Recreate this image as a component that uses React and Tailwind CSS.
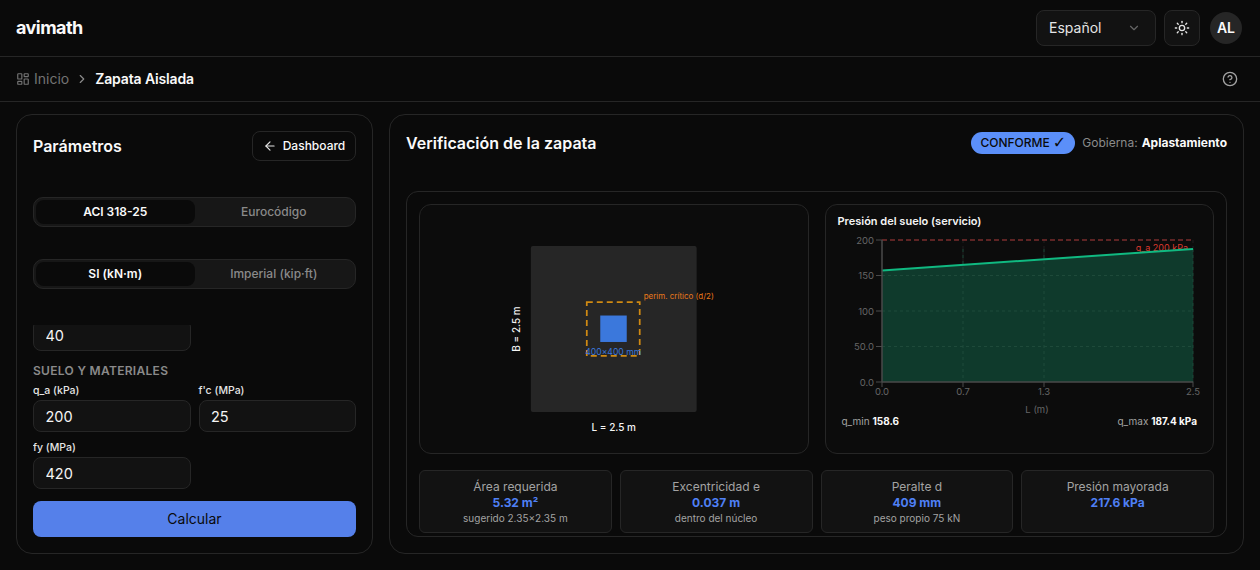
import React from "react";
import { ArrowLeft, ChevronDown, ChevronRight, CircleHelp, LayoutDashboard, Sun } from "lucide-react";

const Field = ({ label, value }) => (
  <div>
    <div className="h-[17px] text-[10.5px] leading-[16px] font-medium text-[#e5e5e5]">{label}</div>
    <input
      readOnly
      value={value}
      className="w-full h-8 px-[11.5px] rounded-lg border border-[#262626] bg-[#121212] text-[14.5px] text-[#f5f5f5] outline-none"
    />
  </div>
);

const Segmented = ({ active, other, className }) => (
  <div className={`grid grid-cols-2 h-[30px] p-[2px] rounded-[10px] border border-[#262626] bg-[#171717] text-xs ${className}`}>
    <div className="flex items-center justify-center rounded-lg bg-[#0a0a0a] font-semibold text-[#fafafa]">{active}</div>
    <div className="flex items-center justify-center font-medium text-[#8a8a8a]">{other}</div>
  </div>
);

const Stat = ({ label, value, sub }) => (
  <div className="h-[63px] pt-2 rounded-md border border-[#262626] bg-[#121212] text-center">
    <div className="text-xs leading-4 text-[#a3a3a3]">{label}</div>
    <div className="text-xs leading-4 font-bold text-[#4f80f5]">{value}</div>
    <div className="text-[10px] leading-[14px] text-[#a3a3a3]">{sub}</div>
  </div>
);

const FootingPlan = () => (
  <svg className="w-full h-full" viewBox="0 0 388 248">
    <rect x="111" y="41" width="166" height="166" rx="2" fill="#262626" />
    <rect x="180.5" y="110.5" width="26.5" height="26.5" fill="#3b78dc" />
    <rect x="167" y="97" width="53" height="54" fill="none" stroke="#d08a12" strokeWidth="1.75" strokeDasharray="6 4" />
    <text x="224" y="94" fontSize="8" fill="#e8771b">perim. crítico (d/2)</text>
    <text x="193.5" y="150" fontSize="8.6" textAnchor="middle" fill="#3b78dc">400×400 mm</text>
    <text x="194" y="226" fontSize="10" fontWeight="500" textAnchor="middle" fill="#f5f5f5">L = 2.5 m</text>
    <text x="100" y="124" fontSize="10" fontWeight="500" textAnchor="middle" fill="#f5f5f5" transform="rotate(-90 100 124)">B = 2.5 m</text>
  </svg>
);

const PressureChart = () => {
  const yTicks = [
    [10, "200"],
    [45.5, "150"],
    [81, "100"],
    [116.5, "50.0"],
    [152, "0.0"],
  ];
  const xTicks = [
    [44, "0.0"],
    [125, "0.7"],
    [206, "1.3"],
    [355, "2.5"],
  ];
  return (
    <svg className="w-[363px] h-[185px] mt-px -mb-px overflow-visible shrink-0" viewBox="0 0 363 185">
      {yTicks.slice(1, 4).map(([y]) => (
        <line key={y} x1="44" x2="355" y1={y} y2={y} stroke="#1f1f1f" strokeDasharray="3 3" />
      ))}
      {xTicks.slice(1).map(([x]) => (
        <line key={x} x1={x} x2={x} y1="10" y2="152" stroke="#1f1f1f" strokeDasharray="3 3" />
      ))}
      <line x1="44" x2="355" y1="10" y2="10" stroke="#7a2c2c" strokeWidth="1.5" strokeDasharray="5 3" />
      <text x="350" y="21" fontSize="9" textAnchor="end" fill="#dc3a2e">q_a 200 kPa</text>
      <polygon points="44,40.5 355,19 355,152 44,152" fill="#0f3a2c" />
      {yTicks.slice(1, 4).map(([y]) => (
        <line key={y} x1="44" x2="355" y1={y} y2={y} stroke="#1e4a3a" strokeDasharray="3 3" />
      ))}
      {xTicks.slice(1).map(([x]) => (
        <line key={x} x1={x} x2={x} y1="19" y2="152" stroke="#1e4a3a" strokeDasharray="3 3" />
      ))}
      <line x1="44" x2="355" y1="40.5" y2="19" stroke="#10b981" strokeWidth="2" />
      <line x1="44" x2="44" y1="10" y2="152" stroke="#4a4a4a" strokeWidth="1.5" />
      <line x1="44" x2="355" y1="152" y2="152" stroke="#4a4a4a" strokeWidth="1.5" />
      {yTicks.map(([y, t]) => (
        <g key={t}>
          <line x1="38" x2="44" y1={y} y2={y} stroke="#4a4a4a" />
          <text x="36" y={y + 3.5} fontSize="9.5" textAnchor="end" fill="#666666">{t}</text>
        </g>
      ))}
      {xTicks.map(([x, t]) => (
        <g key={t}>
          <line x1={x} x2={x} y1="152" y2="157" stroke="#4a4a4a" />
          <text x={x} y="165" fontSize="9.5" textAnchor="middle" fill="#666666">{t}</text>
        </g>
      ))}
      <text x="199" y="183" fontSize="9.5" textAnchor="middle" fill="#666666">L (m)</text>
    </svg>
  );
};

export default function App() {
  return (
    <div className="w-[1260px] h-[570px] overflow-hidden flex flex-col bg-[#0a0a0a] text-[#fafafa] font-[Inter,sans-serif]">
      {/*header */}
      <header className="h-[57px] shrink-0 flex items-center justify-between pl-4 pr-[18px] border-b border-[#262626]">
        <div className="text-lg font-bold tracking-[-0.03em]">avimath</div>
        <div className="flex items-center">
          <div className="w-[120px] h-9 flex items-center justify-between pl-3 pr-[14px] rounded-lg border border-[#262626] bg-[#121212] text-sm text-[#e5e5e5]">
            Español
            <ChevronDown className="w-[14px] h-[14px] text-[#666666]" />
          </div>
          <div className="w-9 h-9 ml-2 flex items-center justify-center rounded-lg border border-[#262626] bg-[#121212]">
            <Sun className="w-4 h-4 text-[#e5e5e5]" />
          </div>
          <div className="w-8 h-8 ml-[10px] flex items-center justify-center rounded-full bg-[#262626] text-sm font-semibold">AL</div>
        </div>
      </header>

      {/*breadcrumb */}
      <div className="h-[45px] shrink-0 flex items-center justify-between pl-4 pr-[22px] border-b border-[#262626]">
        <div className="flex items-center text-sm">
          <LayoutDashboard className="w-[14px] h-[14px] text-[#737373]" />
          <span className="ml-[4px] text-[#737373]">Inicio</span>
          <ChevronRight className="w-[14px] h-[14px] mx-[6px] text-[#8a8a8a]" />
          <span className="font-semibold tracking-[-0.01em]">Zapata Aislada</span>
        </div>
        <CircleHelp className="w-4 h-4 text-[#a3a3a3]" />
      </div>

      {/*main section */}
      <div className="flex gap-4 px-4 pt-3">
        {/*parametros */}
        <div className="w-[357px] h-[440px] shrink-0 p-4 rounded-2xl border border-[#262626]">
          <div className="flex items-center justify-between h-[30px]">
            <h2 className="text-base font-semibold">Parámetros</h2>
            <div className="w-[104px] h-[30px] flex items-center justify-center gap-[6px] rounded-lg border border-[#262626] text-xs font-medium">
              <ArrowLeft className="w-[14px] h-[14px] text-[#e5e5e5]" />
              Dashboard
            </div>
          </div>

          <Segmented className="mt-9" active="ACI 318-25" other="Eurocódigo" />
          <Segmented className="mt-8" active="SI (kN·m)" other="Imperial (kip·ft)" />

          <div className="mt-9 h-[164px] overflow-hidden">
            <div className="-mt-[6px] grid grid-cols-2 gap-x-2">
              <input readOnly value="40" className="w-full h-8 px-[11.5px] rounded-lg border border-[#262626] bg-[#121212] text-[14.5px] text-[#f5f5f5] outline-none" />
            </div>
            <div className="mt-3 h-5 text-xs leading-4 font-semibold tracking-wide text-[#8a8a8a]">SUELO Y MATERIALES</div>
            <div className="grid grid-cols-2 gap-x-2 gap-y-2">
              <Field label="q_a (kPa)" value="200" />
              <Field label="f'c (MPa)" value="25" />
              <Field label="fy (MPa)" value="420" />
            </div>
          </div>

          <button className="mt-3 w-full h-9 rounded-lg bg-[#5580ea] text-sm text-[#0a0a0a]">Calcular</button>
        </div>

        {/*resultados */}
        <div className="w-[855px] h-[440px] shrink-0 flex flex-col p-4 rounded-2xl border border-[#262626]">
          <div className="h-[60px] shrink-0 flex items-start justify-between">
            <h2 className="mt-[2px] text-base leading-[20px] font-semibold">Verificación de la zapata</h2>
            <div className="flex items-center mt-[1px] text-xs">
              <span className="w-[104px] h-[22px] flex items-center justify-center gap-[3px] rounded-full bg-[#5b8ff9] font-medium text-[#0a0a0a]">
                CONFORME <span className="text-base leading-none font-['DejaVu_Sans']">✓</span>
              </span>
              <span className="ml-[7px] text-[#8a8a8a]">Gobierna:</span>
              <span className="ml-1 font-bold text-[#fafafa]">Aplastamiento</span>
            </div>
          </div>

          <div className="flex-1 min-h-0 overflow-hidden p-3 rounded-xl border border-[#262626]">
            <div className="grid grid-cols-2 gap-4 h-[250px]">
              <div className="rounded-xl border border-[#262626] bg-[#0c0c0c]">
                <FootingPlan />
              </div>
              <div className="flex flex-col px-3 py-2 rounded-xl border border-[#262626] bg-[#0c0c0c]">
                <div className="h-4 text-[11px] leading-4 font-semibold text-[#f5f5f5]">Presión del suelo (servicio)</div>
                <PressureChart />
                <div className="flex justify-between pl-1 pr-[4px] text-[10px] leading-[14px] text-[#a3a3a3]">
                  <span>q_min <b className="font-bold text-[#fafafa]">158.6</b></span>
                  <span>q_max <b className="font-bold text-[#fafafa]">187.4 kPa</b></span>
                </div>
              </div>
            </div>

            <div className="mt-4 grid grid-cols-4 gap-2">
              <Stat label="Área requerida" value="5.32 m²" sub="sugerido 2.35×2.35 m" />
              <Stat label="Excentricidad e" value="0.037 m" sub="dentro del núcleo" />
              <Stat label="Peralte d" value="409 mm" sub="peso propio 75 kN" />
              <Stat label="Presión mayorada" value="217.6 kPa" />
            </div>
          </div>
        </div>
      </div>
    </div>
  );
}
